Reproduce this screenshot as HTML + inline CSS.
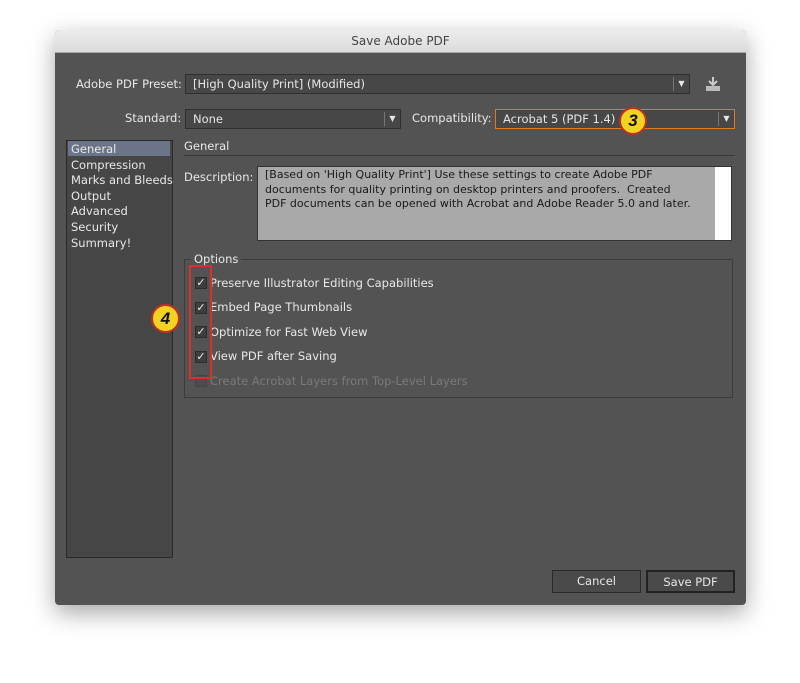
<!DOCTYPE html>
<html><head><style>
*{box-sizing:border-box;margin:0;padding:0}
body{width:800px;height:683px;background:#fff;position:relative;overflow:hidden;font-family:"DejaVu Sans","Liberation Sans",sans-serif;font-size:11.5px;color:#e8e8e8}
.a{position:absolute}
.dlg{left:55px;top:30px;width:691px;height:575px;background:#535353;border-radius:4px;box-shadow:0 8px 24px rgba(0,0,0,.35);overflow:hidden}
.title{left:0;top:0;width:100%;height:23px;background:linear-gradient(#ececec,#dcdcdc);color:#444;text-align:center;line-height:23px;font-size:12px;border-bottom:1px solid #aaa}
.dd{background:#474747;border:1px solid #2f2f2f;color:#e6e6e6;padding-left:7px;line-height:18px}
.arr{position:absolute;right:0;top:2px;width:16px;height:14px;border-left:1px solid #777;text-align:center;font-size:8px;line-height:14px}
.lab{color:#e8e8e8}
.cb{width:12px;height:12px;background:#3e3e3e;border:1px solid #2c2c2c;font-size:11px;line-height:10px;text-align:center;color:#eee}
.ci{border-radius:50%;background:#f3d321;border:2px solid #c03020;color:#111;font:bold italic 17px "Liberation Sans",sans-serif;text-align:center}
.btn{background:#4a4a4a;border:1px solid #2a2a2a;text-align:center;line-height:21px;color:#e8e8e8}
</style></head><body>
<div class="a dlg">
<div class="a title">Save Adobe PDF</div>
</div>
<div class="a lab" style="left:76px;top:77px">Adobe PDF Preset:</div>
<div class="a dd" style="left:185px;top:74px;width:505px;height:20px">[High Quality Print] (Modified)<span class="arr">▼</span></div>
<svg class="a" style="left:703px;top:75px" width="20" height="18"><path d="M10 2v8M6 6l4 4 4-4" stroke="#ccc" stroke-width="2" fill="none"/><rect x="3" y="11" width="14" height="5" fill="#bbb"/></svg>
<div class="a lab" style="left:125px;top:111px">Standard:</div>
<div class="a dd" style="left:185px;top:109px;width:216px;height:20px">None<span class="arr">▼</span></div>
<div class="a lab" style="left:412px;top:111px">Compatibility:</div>
<div class="a dd" style="left:495px;top:109px;width:240px;height:20px;border-color:#e07a20">Acrobat 5 (PDF 1.4)<span class="arr">▼</span></div>
<div class="a ci" style="left:619px;top:107px;width:28px;height:28px;line-height:24px">3</div>
<div class="a" style="left:66px;top:140px;width:107px;height:418px;background:#464646;border:1px solid #2a2a2a"></div>
<div class="a" style="left:68px;top:141px;width:102px;height:15px;background:#6b7488"></div>
<div class="a" style="left:71px;top:142px;line-height:15.6px">General<br>Compression<br>Marks and Bleeds<br>Output<br>Advanced<br>Security<br>Summary!</div>
<div class="a" style="left:184px;top:139px">General</div>
<div class="a" style="left:184px;top:155px;width:551px;height:1px;background:#3a3a3a"></div>
<div class="a" style="left:184px;top:170px">Description:</div>
<div class="a" style="left:257px;top:166px;width:475px;height:75px;background:#a9a9a9;border:1px solid #333;color:#1a1a1a;padding:1px 7px;line-height:14.7px;font-size:11px">[Based on 'High Quality Print'] Use these settings to create Adobe PDF<br>documents for quality printing on desktop printers and proofers.&nbsp; Created<br>PDF documents can be opened with Acrobat and Adobe Reader 5.0 and later.<div class="a" style="right:0;top:0;width:16px;height:73px;background:#fff"></div></div>
<div class="a" style="left:184px;top:259px;width:549px;height:139px;border:1px solid #3c3c3c"></div>
<div class="a" style="left:191px;top:252px;background:#535353;padding:0 3px">Options</div>
<div class="a cb" style="left:195px;top:277px">✓</div><div class="a" style="left:210px;top:276px">Preserve Illustrator Editing Capabilities</div>
<div class="a cb" style="left:195px;top:302px">✓</div><div class="a" style="left:210px;top:300px">Embed Page Thumbnails</div>
<div class="a cb" style="left:195px;top:326px">✓</div><div class="a" style="left:210px;top:325px">Optimize for Fast Web View</div>
<div class="a cb" style="left:195px;top:351px">✓</div><div class="a" style="left:210px;top:349px">View PDF after Saving</div>
<div class="a cb" style="left:195px;top:375px;background:#4c4c4c;border-color:#444"></div><div class="a" style="left:210px;top:374px;color:#7a7a7a">Create Acrobat Layers from Top-Level Layers</div>
<div class="a" style="left:189px;top:265px;width:23px;height:114px;border:2px solid #d8302a"></div>
<div class="a ci" style="left:151px;top:304px;width:29px;height:29px;line-height:25px">4</div>
<div class="a btn" style="left:552px;top:570px;width:89px;height:23px">Cancel</div>
<div class="a btn" style="left:646px;top:570px;width:89px;height:23px;border:2px solid #222">Save PDF</div>
</body></html>
